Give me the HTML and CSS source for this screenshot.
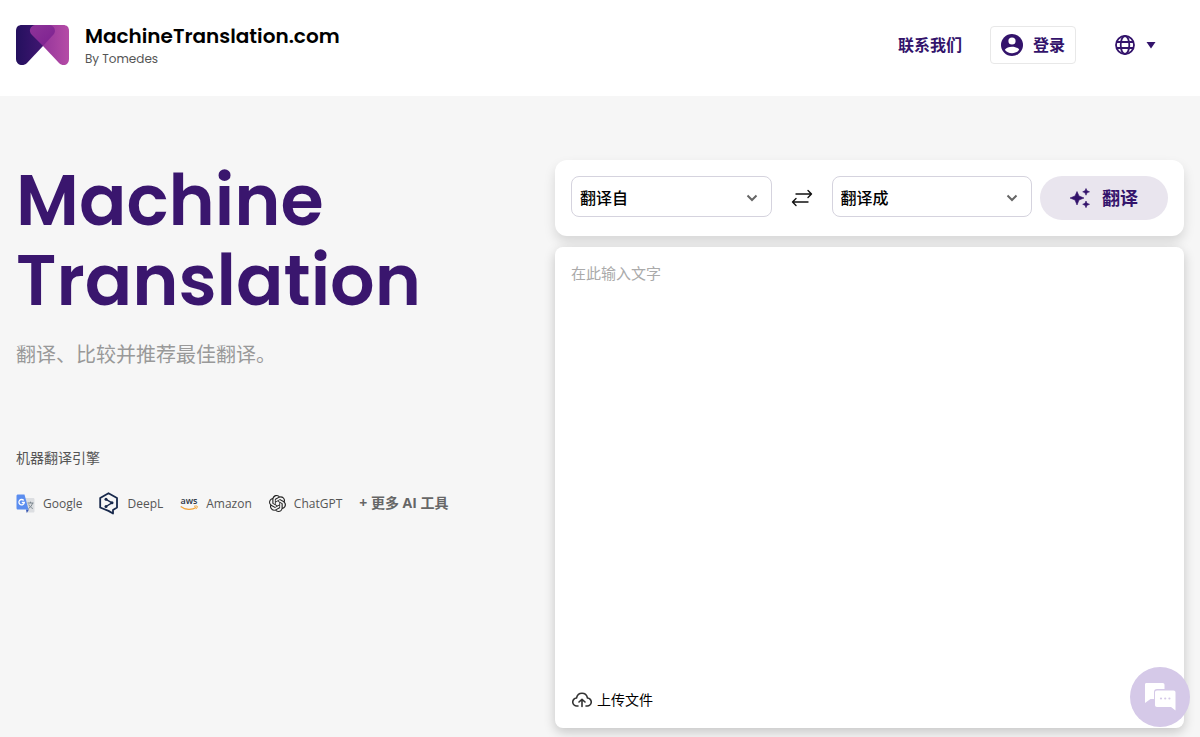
FILE: index.html
```html
<!DOCTYPE html>
<html lang="zh-CN">
<head>
<meta charset="utf-8">
<meta name="viewport" content="width=device-width, initial-scale=1">
<title>MachineTranslation.com</title>
<link rel="stylesheet" href="styles.css">
</head>
<body>
<header class="header">
  <a class="brand" href="#">
    <svg class="brand-mark" width="54" height="42" viewBox="0 0 54 42" aria-hidden="true">
      <defs>
        <linearGradient id="dark" x1="0" y1="0" x2="1" y2="0"><stop offset="0" stop-color="#24105e"/><stop offset="1" stop-color="#4a1878"/></linearGradient>
        <linearGradient id="pink" x1="0" y1="0" x2="1" y2="0"><stop offset="0" stop-color="#96369b"/><stop offset="1" stop-color="#b54ca6"/></linearGradient>
        <linearGradient id="heart" x1="0" y1="0" x2="1" y2="1"><stop offset="0" stop-color="#8e3499"/><stop offset="1" stop-color="#7c2090"/></linearGradient>
      </defs>
      <path d="M6 1h30L27 22 11 39c-4 4-11 2-11-4V7c0-4 2-6 6-6z" fill="url(#dark)"/>
      <path d="M47 1H30l-3 21 16 17c4 4 10 2 10-4V7c0-4-2-6-6-6z" fill="url(#pink)"/>
      <path d="M19 1h15c4.500 1 6.500 6 3.500 9.500L27 22 16 11c-4-4-2-9 3-10z" fill="url(#heart)"/>
    </svg>
    <span class="brand-text">
      <span class="brand-name">MachineTranslation.com</span>
      <span class="brand-by">By Tomedes</span>
    </span>
  </a>
  <nav class="nav">
    <a class="nav-link" href="#">联系我们</a>
    <button class="login" type="button">
      <svg width="22" height="22" viewBox="0 0 22 22" aria-hidden="true"><circle cx="11" cy="11" r="11" fill="currentColor"/><circle cx="11" cy="7" r="3.6" fill="#fff"/><path d="M3.8 15.7C5 13.600 8.200 12.700 11 12.700s6 .9 7.200 3C16.600 17.900 14 19.200 11 19.200s-5.600-1.300-7.200-3.500z" fill="#fff"/></svg>
      <span>登录</span>
    </button>
    <button class="language" type="button" aria-label="语言">
      <svg width="20" height="20" viewBox="0 0 20 20" fill="none" stroke="currentColor" stroke-width="1.800" aria-hidden="true"><circle cx="10" cy="10" r="9"/><ellipse cx="10" cy="10" rx="4.300" ry="9"/><path d="M1.500 7h17M1.500 13h17"/></svg>
      <svg width="10" height="8" viewBox="0 0 10 8" aria-hidden="true"><path d="M.5 1h9L5 7.500z" fill="currentColor"/></svg>
    </button>
  </nav>
</header>
<main class="hero">
  <section class="intro">
    <h1 class="title">Machine Translation</h1>
    <p class="subtitle">翻译、比较并推荐最佳翻译。</p>
    <h2 class="engines-title">机器翻译引擎</h2>
    <ul class="engines">
      <li class="engine engine-google">
        <svg width="19" height="20" viewBox="0 0 18 20" aria-hidden="true"><path d="M7 4h9.500c1 0 1.500.5 1.500 1.500V17c0 1-.5 1.500-1.500 1.500H10z" fill="#dcdee1"/><path d="M9.500 15.500h3L10.300 19z" fill="#3454b4"/><path d="M1.500.5H8l4 15H1.500C.5 15.500 0 15 0 14V2C0 1 .5.5 1.500.5z" fill="#5b8def"/><path d="M7.200 6.500a2.700 2.700 0 1 0 .6 2H5.300" fill="none" stroke="#fff" stroke-width="1.300"/><path d="M11 9h6M14 7.700V9m2 0c-.5 2.500-2.200 4.300-4 5.500M12.300 10.500c.8 1.800 2 3 4 4" fill="none" stroke="#7a858d" stroke-width="1"/></svg>
        <span>Google</span>
      </li>
      <li class="engine engine-deepl">
        <svg width="20" height="23" viewBox="0 0 20 23" fill="none" stroke="#17284b" stroke-width="1.800" stroke-linejoin="round" aria-hidden="true"><path d="M9.500 1.200 18 6v9.500l-4 2.400v3.600l-4.500-2.600L1.200 15.500V6z"/><path d="m7 7.300 6 3.500-6 3.700" stroke-width="1.400"/><g fill="#17284b" stroke="none"><circle cx="7" cy="7.300" r="1.500"/><circle cx="13" cy="10.800" r="1.500"/><circle cx="7" cy="14.500" r="1.500"/></g></svg>
        <span>DeepL</span>
      </li>
      <li class="engine engine-amazon">
        <svg width="18" height="20" viewBox="0 0 18 20" aria-hidden="true"><text class="aws" x="9" y="10" text-anchor="middle">aws</text><path d="M.7 12.500c4.800 3.600 11 3.800 15.500 1" fill="none" stroke="#f2a33a" stroke-width="1.300"/><path d="M14 12.300c1.500-.4 3-.4 3.300 0 .2.500-.3 2-1.300 2.800" fill="none" stroke="#f2a33a"/></svg>
        <span>Amazon</span>
      </li>
      <li class="engine engine-chatgpt">
        <svg width="17" height="17" viewBox="0 0 24 24" fill="#222" aria-hidden="true"><path d="M22.2819 9.8211a5.9847 5.9847 0 0 0-.5157-4.9108 6.0462 6.0462 0 0 0-6.5098-2.9A6.0651 6.0651 0 0 0 4.9807 4.1818a5.9847 5.9847 0 0 0-3.9977 2.9 6.0462 6.0462 0 0 0 .7427 7.0966 5.98 5.98 0 0 0 .511 4.9107 6.051 6.051 0 0 0 6.5146 2.9001A5.9847 5.9847 0 0 0 13.2599 24a6.0557 6.0557 0 0 0 5.7718-4.2058 5.9894 5.9894 0 0 0 3.9977-2.9001 6.0557 6.0557 0 0 0-.7475-7.0729zm-9.022 12.6081a4.4755 4.4755 0 0 1-2.8764-1.0408l.1419-.0804 4.7783-2.7582a.7948.7948 0 0 0 .3927-.6813v-6.7369l2.02 1.1686a.071.071 0 0 1 .038.052v5.5826a4.504 4.504 0 0 1-4.4945 4.4944zm-9.6607-4.1254a4.4708 4.4708 0 0 1-.5346-3.0137l.142.0852 4.783 2.7582a.7712.7712 0 0 0 .7806 0l5.8428-3.3685v2.3324a.0804.0804 0 0 1-.0332.0615L9.74 19.9502a4.4992 4.4992 0 0 1-6.1408-1.6464zM2.3408 7.8956a4.485 4.485 0 0 1 2.3655-1.9728V11.6a.7664.7664 0 0 0 .3879.6765l5.8144 3.3543-2.0201 1.1685a.0757.0757 0 0 1-.071 0l-4.8303-2.7865A4.504 4.504 0 0 1 2.3408 7.872zm16.5963 3.8558L13.1038 8.364 15.1192 7.2a.0757.0757 0 0 1 .071 0l4.8303 2.7913a4.4944 4.4944 0 0 1-.6765 8.1042v-5.6772a.79.79 0 0 0-.407-.667zm2.0107-3.0231l-.142-.0852-4.7735-2.7818a.7759.7759 0 0 0-.7854 0L9.409 9.2297V6.8974a.0662.0662 0 0 1 .0284-.0615l4.8303-2.7866a4.4992 4.4992 0 0 1 6.6802 4.66zM8.3065 12.863l-2.02-1.1638a.0804.0804 0 0 1-.038-.0567V6.0742a4.4992 4.4992 0 0 1 7.3757-3.4537l-.142.0805L8.704 5.459a.7948.7948 0 0 0-.3927.6813zm1.0976-2.3654l2.602-1.4998 2.6069 1.4998v2.9994l-2.5974 1.4997-2.6067-1.4997z"/></svg>
        <span>ChatGPT</span>
      </li>
      <li><a class="more" href="#">+ 更多 AI 工具</a></li>
    </ul>
  </section>
  <form class="translator">
    <div class="toolbar">
      <div class="picker">
        <select class="select" aria-label="翻译自"><option>翻译自</option></select>
        <svg class="chevron" width="12" height="8" viewBox="0 0 12 8" aria-hidden="true"><path d="m1.500 1.500 4.500 4.500 4.500-4.500" fill="none" stroke="#666" stroke-width="2"/></svg>
      </div>
      <button class="swap" type="button" aria-label="交换语言">
        <svg width="22" height="18" viewBox="0 0 22 18" fill="none" stroke="#111" stroke-width="1.400" stroke-linecap="round" stroke-linejoin="round" aria-hidden="true"><path d="M5 5h15.500M17 1.500 20.500 5 17 8.500M17 13H1.500M5 9.500 1.500 13 5 16.500"/></svg>
      </button>
      <div class="picker">
        <select class="select" aria-label="翻译成"><option>翻译成</option></select>
        <svg class="chevron" width="12" height="8" viewBox="0 0 12 8" aria-hidden="true"><path d="m1.500 1.500 4.500 4.500 4.500-4.500" fill="none" stroke="#666" stroke-width="2"/></svg>
      </div>
      <button class="translate" type="button">
        <svg width="20" height="20" viewBox="0 0 20 20" fill="currentColor" aria-hidden="true"><path d="m7 3.500 2 4.500 5 2-5 2-2 5-2-5-5-2 5-2zM16 .5l1 2.300 2.500 1-2.500 1-1 2.400-1-2.400-2.300-1 2.300-1zM16 13l1 2.300 2.500 1-2.500 1-1 2.400-1-2.400-2.300-1 2.300-1z" stroke="currentColor" stroke-width=".6" stroke-linejoin="round"/></svg>
        <span>翻译</span>
      </button>
    </div>
    <div class="editor">
      <textarea class="input" aria-label="文字" placeholder="在此输入文字"></textarea>
      <button class="upload" type="button">
        <svg width="20" height="16" viewBox="0 0 20 16" fill="none" stroke="#333" stroke-width="1.600" stroke-linecap="round" stroke-linejoin="round" aria-hidden="true"><path d="M6 14H5a4 4 0 0 1-.5-8C5.200 3 7.300 1.200 10 1.200S14.800 3 15.500 6A4 4 0 0 1 15 14h-1M10 14.500V7.500M7 10l3-2.700 3 2.700"/></svg>
        <span>上传文件</span>
      </button>
    </div>
  </form>
</main>
<button class="chat" type="button" aria-label="聊天">
  <svg width="32" height="30" viewBox="0 0 32 30" aria-hidden="true"><path d="M2.500 1h16c1.500 0 2 .7 2 2v4H13c-2 0-3 1-3 3v7H6.500L1 21V2.500C1 1.500 1.500 1 2.500 1z" fill="#fff"/><path d="M13 8.500h16.500c1.300 0 2 .7 2 2V28.500L27 25H13c-1.300 0-2-.7-2-2V10.500c0-1.300.7-2 2-2z" fill="#fff"/><g fill="#d5c9e8"><circle cx="17" cy="16.500" r="1.100"/><circle cx="21.200" cy="16.500" r="1.100"/><circle cx="25.400" cy="16.500" r="1.100"/></g></svg>
</button>
</body>
</html>
```
FILE: styles.css
```css
* {
  box-sizing: border-box;
}

body {
  margin: 0;
  min-height: 100vh;
  background: #f6f6f6;
  color: #000;
  font-family: "Open Sans", "Noto Sans CJK SC", sans-serif;
  font-size: 16px;
  overflow: hidden;
}

button {
  padding: 0;
  border: 0;
  background: none;
  color: inherit;
  font: inherit;
  cursor: pointer;
}

a {
  color: inherit;
  text-decoration: none;
}

.header {
  display: flex;
  align-items: center;
  justify-content: space-between;
  height: 96px;
  padding: 0 44px 6px 16px;
  background: #fff;
}

.brand {
  display: flex;
  align-items: center;
  gap: 15px;
  font-family: Poppins, Inter, sans-serif;
}

.brand-text {
  display: flex;
  flex-direction: column;
}

.brand-name {
  font-size: 20px;
  font-weight: 600;
  line-height: 28px;
}

.brand-by {
  color: #555;
  font-size: 12px;
  line-height: 18px;
}

.nav {
  display: flex;
  align-items: center;
  color: #33136b;
  font-weight: 700;
  line-height: 20px;
}

.nav-link {
  margin-right: 28px;
}

.login {
  display: flex;
  align-items: center;
  gap: 10px;
  height: 38px;
  margin-right: 39px;
  padding: 0 10px;
  border: 1px solid #e8e8e8;
  border-radius: 4px;
}

.language {
  display: flex;
  align-items: center;
  gap: 11px;
}

.hero {
  display: grid;
  grid-template-columns: 6fr 7fr;
  padding: 64px 16px 9px;
}

.intro {
  padding-top: 1px;
}

.title {
  max-width: 440px;
  margin: 0;
  color: #3a166e;
  font-family: Poppins, Inter, sans-serif;
  font-size: 70px;
  font-weight: 600;
  line-height: 80px;
}

.subtitle {
  margin: 18px 0 0;
  color: #999;
  font-size: 20px;
  line-height: 32px;
}

.engines-title {
  margin: 77px 0 0;
  color: #555;
  font-size: 14px;
  font-weight: 400;
  line-height: 20px;
}

.engines {
  display: flex;
  align-items: center;
  gap: 17px;
  margin: 23px 0 0;
  padding: 0;
  color: #555;
  font-size: 12px;
  line-height: 24px;
  list-style: none;
  white-space: nowrap;
}

.engine {
  display: flex;
  align-items: center;
  gap: 8px;
}

.aws {
  fill: #2b3545;
  font-family: "Open Sans", sans-serif;
  font-size: 9px;
  font-weight: 600;
}

.more {
  color: #666;
  font-size: 14px;
  font-weight: 700;
}

.translator {
  display: flex;
  flex-direction: column;
  gap: 11px;
}

.toolbar {
  display: flex;
  align-items: flex-start;
  padding: 16px;
  border-radius: 12px;
  background: #fff;
  box-shadow: 0 6px 12px rgba(0, 0, 0, 0.13);
}

.picker {
  position: relative;
  flex: 1;
}

.select {
  width: 100%;
  height: 41px;
  padding: 2px 8px 0;
  border: 1px solid #d5d3de;
  border-radius: 8px;
  appearance: none;
  background: #fff;
  color: #000;
  font: inherit;
  font-weight: 500;
}

.chevron {
  position: absolute;
  top: 18px;
  right: 14px;
  pointer-events: none;
}

.swap {
  display: grid;
  place-items: center;
  width: 60px;
  height: 44px;
}

.translate {
  display: flex;
  align-items: center;
  justify-content: center;
  gap: 12px;
  width: 128px;
  height: 44px;
  margin-left: 8px;
  border-radius: 22px;
  background: #e9e5ee;
  color: #33136b;
  font-size: 18px;
  font-weight: 700;
  line-height: 24px;
}

.editor {
  display: flex;
  flex-direction: column;
  align-items: flex-start;
  min-height: 481px;
  padding: 14px 16px 16px;
  border-radius: 8px;
  background: #fff;
  box-shadow: 0 4px 12px rgba(0, 0, 0, 0.2);
}

.input {
  flex: 1;
  width: 100%;
  padding: 0;
  border: 0;
  outline: 0;
  background: none;
  font: inherit;
  font-size: 15px;
  line-height: 24px;
  resize: none;
}

.input::placeholder {
  color: #aaa;
}

.upload {
  display: flex;
  align-items: center;
  gap: 5px;
  padding-left: 1px;
  font-size: 14px;
  line-height: 24px;
}

.chat {
  position: fixed;
  right: 10px;
  bottom: 10px;
  display: grid;
  place-items: center;
  width: 60px;
  height: 60px;
  border-radius: 50%;
  background: #d5c9e8;
}
```
